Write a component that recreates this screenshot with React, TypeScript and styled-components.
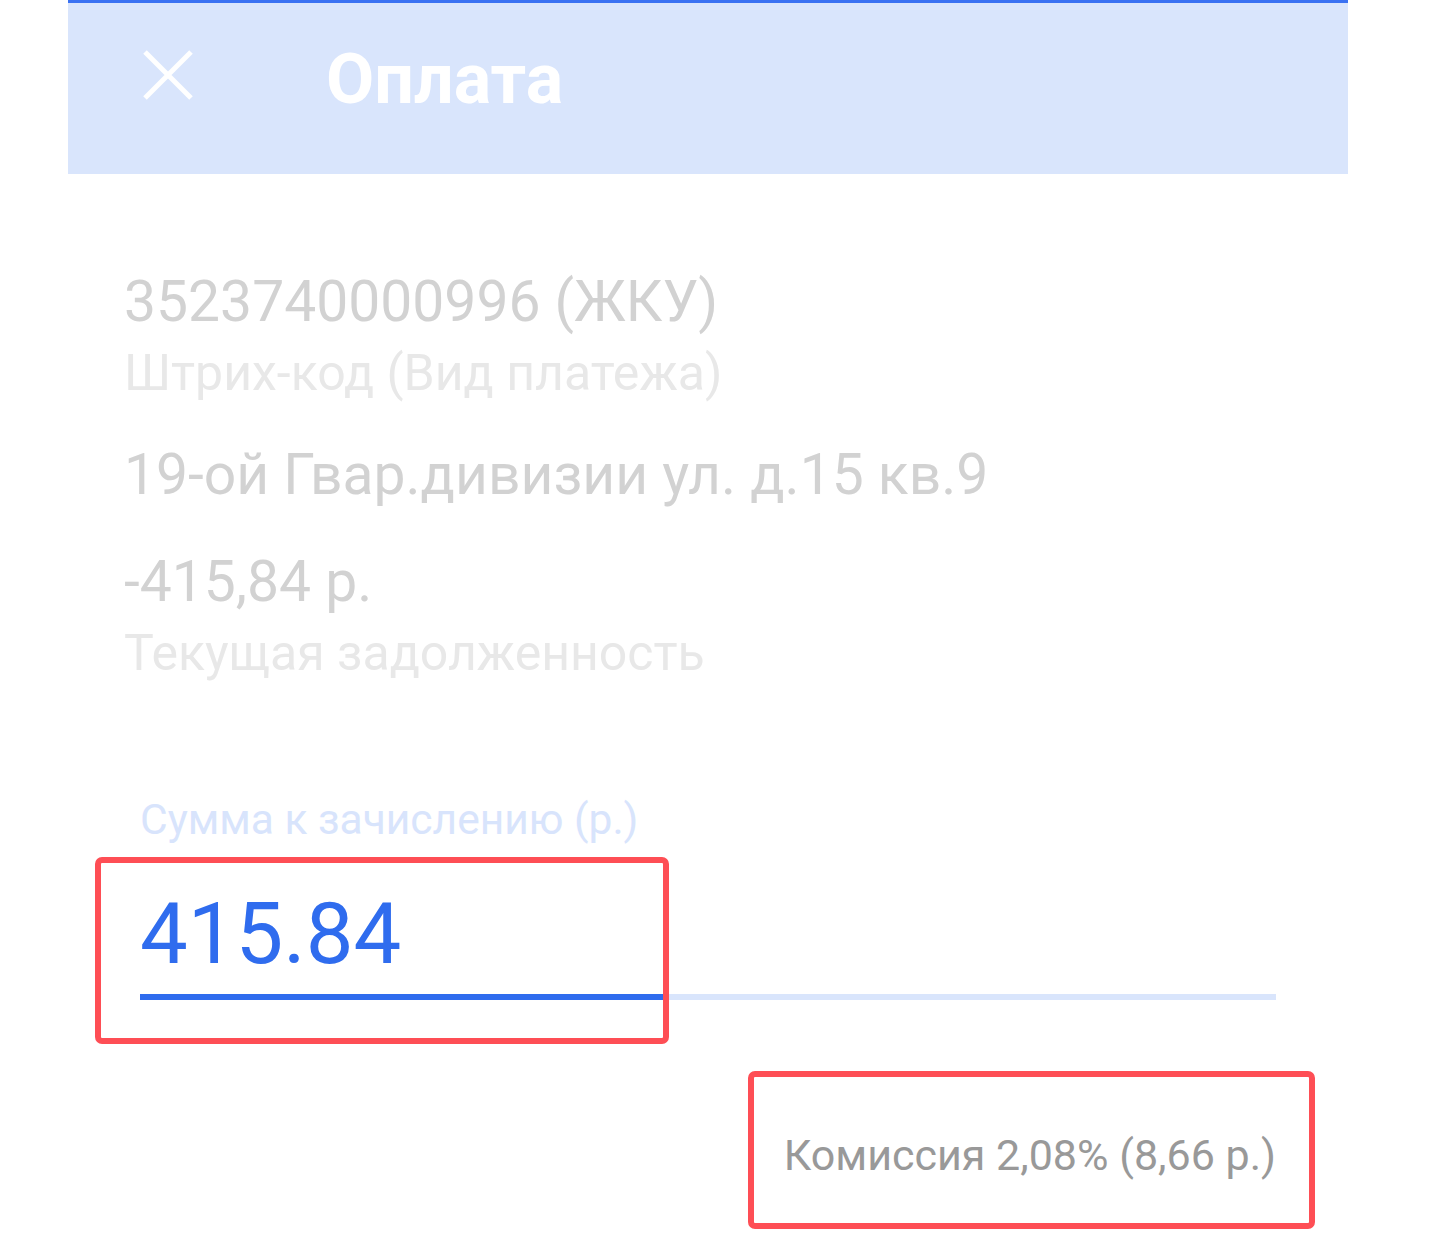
import styled, { createGlobalStyle } from 'styled-components';

const GlobalStyle = createGlobalStyle`
  html, body {
    margin: 0;
    padding: 0;
    background: #ffffff;
  }
  body {
    font-family: Roboto, "Noto Sans", "Liberation Sans", sans-serif;
  }
`;

const Screen = styled.div`
  width: 1280px;
  margin-left: 68px;
  min-height: 1240px;
  background: #ffffff;
`;

const Header = styled.header`
  display: flex;
  align-items: flex-start;
  height: 171px;
  box-sizing: content-box;
  border-top: 3px solid #3a71f2;
  background: #d9e5fc;
  padding-left: 75px;
`;

const CloseButton = styled.button`
  display: flex;
  padding: 0;
  margin-top: 47px;
  border: none;
  background: none;
  cursor: pointer;
`;

const Title = styled.h1`
  margin: 39px 0 0 133px;
  font-size: 70px;
  line-height: 74px;
  font-weight: 700;
  color: #ffffff;
`;

const Details = styled.section`
  display: flex;
  flex-direction: column;
  gap: 40px;
  padding: 94px 58px 0 56px;
`;

const Item = styled.div`
  display: flex;
  flex-direction: column;
  gap: 10px;
`;

const Value = styled.div`
  font-size: 57px;
  line-height: 67px;
  color: #d2d2d2;
`;

const Caption = styled.div`
  font-size: 50px;
  line-height: 56px;
  color: #e8e8e8;
`;

const Field = styled.div`
  padding: 114px 72px 0;
`;

const FieldLabel = styled.label`
  display: block;
  font-size: 42.5px;
  line-height: 50px;
  color: #d8e4fc;
`;

const InputBlock = styled.div`
  position: relative;
  margin-top: 39px;
`;

const AmountInput = styled.input`
  display: block;
  width: 100%;
  padding: 0;
  border: none;
  outline: none;
  background: transparent;
  font-family: inherit;
  font-size: 85px;
  line-height: 100px;
  height: 100px;
  color: #2f6cee;
`;

const Track = styled.div`
  display: flex;
  margin-top: 10px;
  height: 6px;
  background: #d9e5fc;
`;

const TrackFill = styled.div<{ $width: number }>`
  width: ${(p) => p.$width}px;
  background: #2f6cee;
`;

const Highlight = styled.div<{ $top: number; $left: number; $width: number; $height: number }>`
  position: absolute;
  top: ${(p) => p.$top}px;
  left: ${(p) => p.$left}px;
  width: ${(p) => p.$width}px;
  height: ${(p) => p.$height}px;
  box-sizing: border-box;
  border: 6px solid #fe4e55;
  border-radius: 7px;
  pointer-events: none;
`;

const CommissionRow = styled.div`
  display: flex;
  justify-content: flex-end;
  padding: 130px 72px 0;
`;

const Commission = styled.div`
  position: relative;
  font-size: 43px;
  line-height: 50px;
  color: #999999;
`;

const CloseIcon = () => (
  <svg width="50" height="50" viewBox="0 0 50 50">
    <path d="M2 2 L48 48 M48 2 L2 48" stroke="#ffffff" strokeWidth="5" fill="none" />
  </svg>
);

const App = () => {
  return (
    <>
      <GlobalStyle />
      <Screen>
        <Header>
          <CloseButton type="button" aria-label="Закрыть">
            <CloseIcon />
          </CloseButton>
          <Title>Оплата</Title>
        </Header>

        <Details>
          <Item>
            <Value>3523740000996 (ЖКУ)</Value>
            <Caption>Штрих-код (Вид платежа)</Caption>
          </Item>
          <Item>
            <Value>19-ой Гвар.дивизии ул. д.15 кв.9</Value>
          </Item>
          <Item>
            <Value>-415,84 р.</Value>
            <Caption>Текущая задолженность</Caption>
          </Item>
        </Details>

        <Field>
          <FieldLabel>Сумма к зачислению (р.)</FieldLabel>
          <InputBlock>
            <AmountInput defaultValue="415.84" />
            <Track>
              <TrackFill $width={524} />
            </Track>
            <Highlight $top={-27} $left={-45} $width={574} $height={187} />
          </InputBlock>
        </Field>

        <CommissionRow>
          <Commission>
            Комиссия 2,08% (8,66 р.)
            <Highlight $top={-59} $left={-36} $width={567} $height={158} />
          </Commission>
        </CommissionRow>
      </Screen>
    </>
  );
};

export default App;
